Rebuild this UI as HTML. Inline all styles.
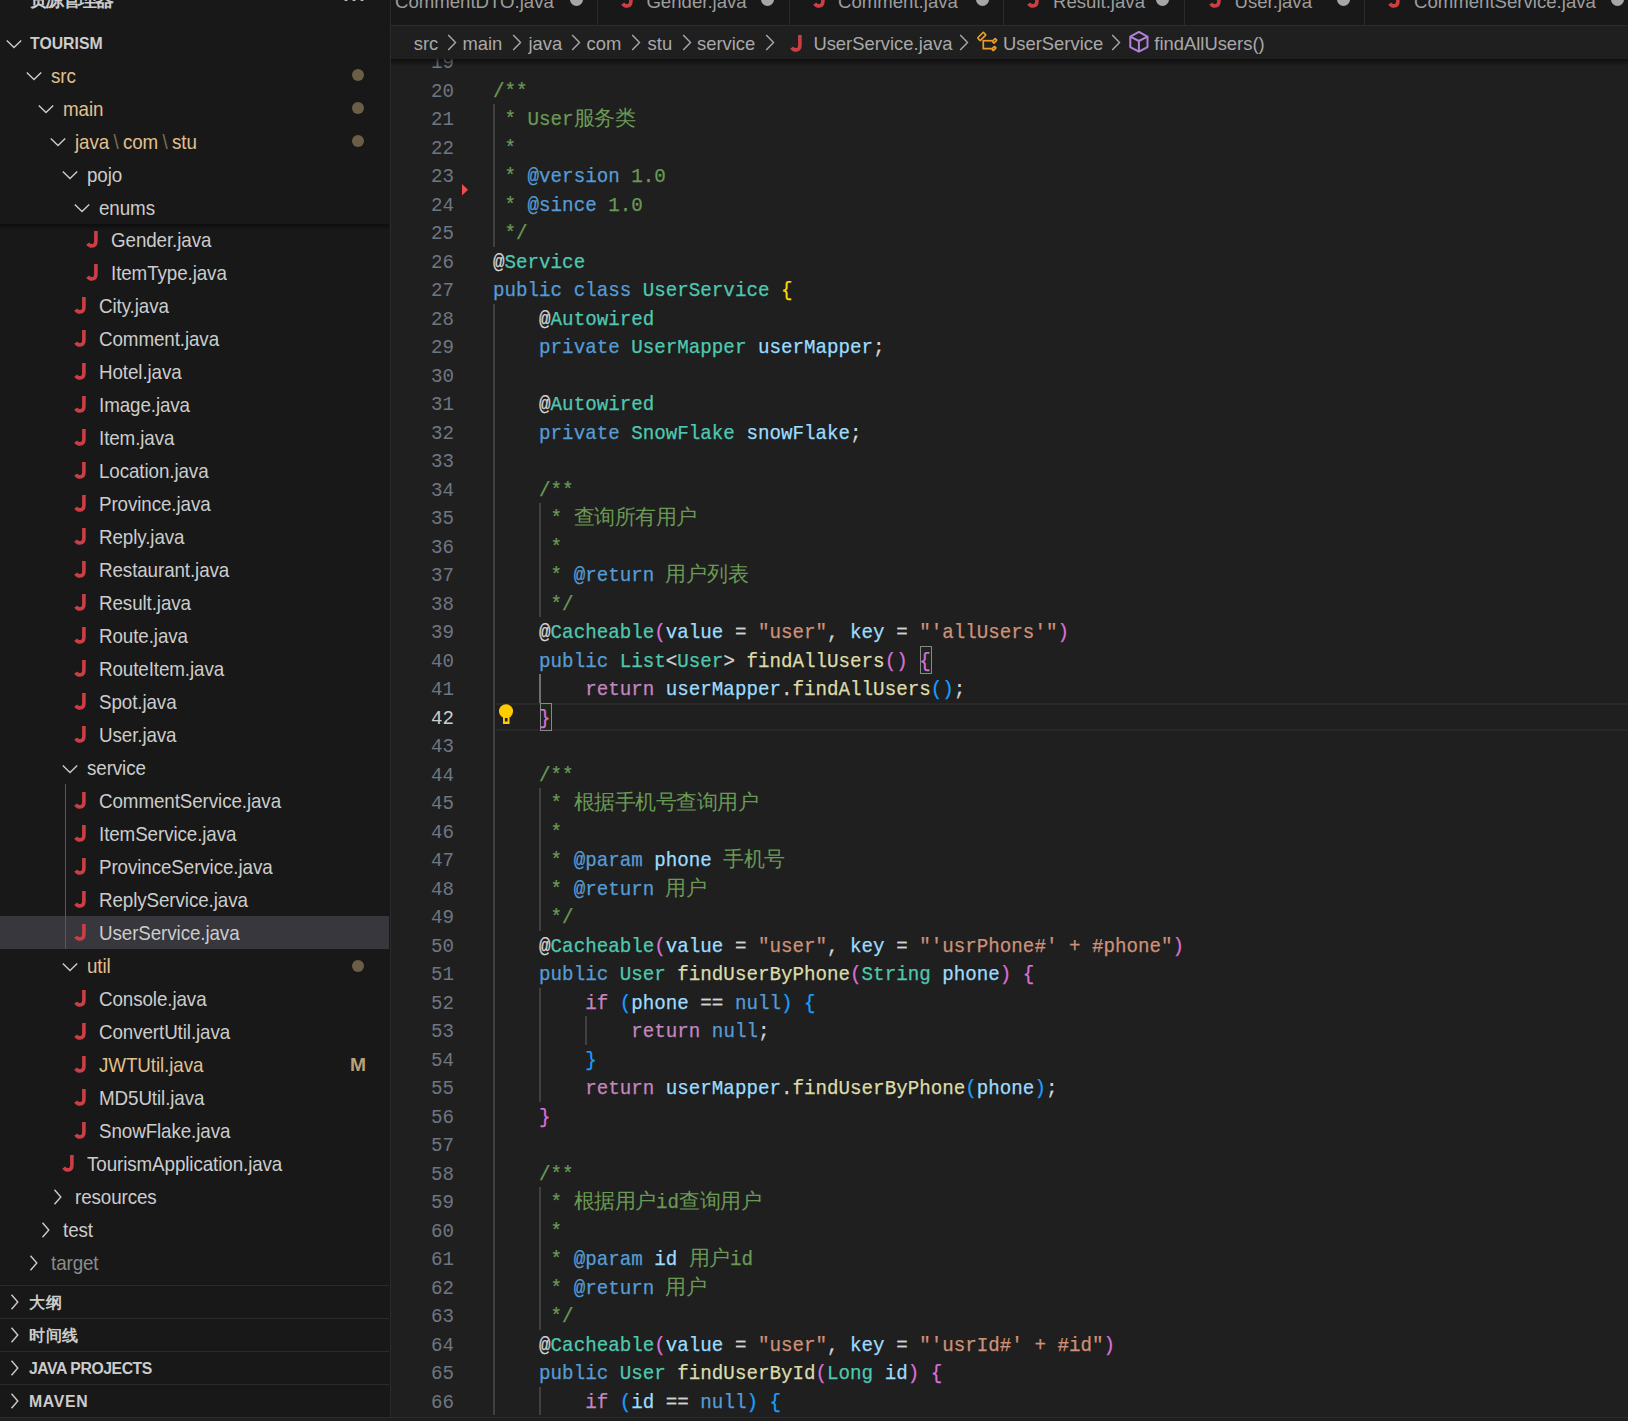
<!DOCTYPE html>
<html><head><meta charset="utf-8"><style>
*{margin:0;padding:0;box-sizing:border-box}
html,body{width:1628px;height:1421px;overflow:hidden;background:#1f1f1f}
body{position:relative;font-family:"Liberation Sans",sans-serif}
#sb{position:absolute;left:0;top:0;width:390px;height:1421px;background:#181818;overflow:hidden}
#vb{position:absolute;left:390px;top:0;width:1px;height:1421px;background:#2b2b2b}
.ch{position:absolute}
.ji{position:absolute}
.lb{position:absolute;height:33px;line-height:33px;font-size:19.8px;letter-spacing:-0.1px;white-space:nowrap;transform:scaleX(0.95);transform-origin:left;padding-top:2.3px}
.dot{position:absolute;left:351.5px;width:12px;height:12px;border-radius:50%;background:#6b5e47}
.badge{position:absolute;left:349.5px;height:33px;line-height:33px;font-size:17.5px;font-weight:bold;color:#b9a077;padding-top:1px;transform:scaleX(1.1);transform-origin:left}
.sel{position:absolute;left:0;width:389px;height:33px;background:#37373d}
.tg{position:absolute;width:1px;background:#585858}
.stsh{position:absolute;left:0;width:389px;height:6px;background:linear-gradient(#0d0d0d,rgba(13,13,13,0))}
.sep{position:absolute;left:0;width:389px;height:1px;background:#2b2b2b}
.sh{position:absolute;left:29px;height:33px;line-height:33px;font-size:15.8px;font-weight:bold;color:#cccccc;padding-top:1px;white-space:nowrap}
.cjh{display:inline-block;width:16.5px;text-align:center}
#tabs{position:absolute;left:391px;top:0;width:1237px;height:26px;background:#181818;border-bottom:1px solid #2b2b2b;overflow:hidden}
.tt{position:absolute;top:-13px;height:30px;line-height:30px;font-size:18.6px;color:#9d9d9d;white-space:nowrap}
.tdot{position:absolute;top:-7px;width:13px;height:13px;border-radius:50%;background:#a6a6a6}
.tsep{position:absolute;top:0;width:1px;height:25px;background:#2b2b2b}
#bc{position:absolute;left:391px;top:26px;width:1237px;height:33px;background:#1f1f1f}
.bt{position:absolute;top:27px;height:33px;line-height:33px;font-size:18.4px;color:#a9a9a9;white-space:nowrap;padding-top:0px}
.bch{position:absolute}
#bcsh{position:absolute;left:391px;top:59px;width:1237px;height:7px;background:linear-gradient(rgba(0,0,0,0.55),rgba(0,0,0,0))}
#ed{position:absolute;left:391px;top:0;width:1237px;height:1421px}
.ln{position:absolute;left:0;width:63px;text-align:right;height:28.5px;line-height:28.5px;font-family:"Liberation Mono",monospace;font-size:20.6px;color:#6e7681;padding-top:2.4px;transform:scaleX(0.9320);transform-origin:right}
.ln.act{color:#cccccc}
.cl{position:absolute;left:102px;height:28.5px;line-height:28.5px;font-family:"Liberation Mono",monospace;font-size:20.6px;white-space:pre;color:#d4d4d4;padding-top:2.4px;-webkit-text-stroke:0.25px currentColor;transform:scaleX(0.9320);transform-origin:left}
.cj{display:inline-block;width:22.102px;text-align:center;color:#6A9955;font-size:20.5px;font-weight:300;-webkit-text-stroke:0;transform:scaleX(1.0729)}
.ig{position:absolute;width:1.5px;background:#404040}
.iga{background:#707070}
.cm{color:#6A9955}.kw{color:#569CD6}.ctl{color:#C586C0}.ty{color:#4EC9B0}.var{color:#9CDCFE}.fn{color:#DCDCAA}.str{color:#CE9178}.p{color:#D4D4D4}.b1{color:#FFD700}.b2{color:#DA70D6}.b3{color:#179FFF}.tag{color:#569CD6}
.ln{position:absolute}
</style></head><body>
<div id="sb">
<div style="position:absolute;left:28.5px;top:-10.7px;font-size:18.5px;font-weight:bold;color:#cccccc;white-space:nowrap;line-height:22px"><span style="display:inline-block;width:16.6px">资</span><span style="display:inline-block;width:16.6px">源</span><span style="display:inline-block;width:16.6px">管</span><span style="display:inline-block;width:16.6px">理</span><span style="display:inline-block;width:16.6px">器</span></div>
<div style="position:absolute;left:344px;top:-3px;width:22px;height:6px">
<div style="position:absolute;left:0;top:0;width:4px;height:4px;border-radius:50%;background:#ccc"></div>
<div style="position:absolute;left:8px;top:0;width:4px;height:4px;border-radius:50%;background:#ccc"></div>
<div style="position:absolute;left:16px;top:0;width:4px;height:4px;border-radius:50%;background:#ccc"></div>
</div>
<svg class="ch" style="left:6px;top:35.8px" width="16" height="16" viewBox="0 0 16 16"><path d="M0.8 4.4 L8 11.6 L15.2 4.4" fill="none" stroke="#cccccc" stroke-width="1.4"/></svg>
<div class="sh" style="left:29.5px;top:25.8px;font-size:16.4px;transform:scaleX(0.965);transform-origin:left">TOURISM</div>
<div class="sel" style="top:916px"></div><div class="tg" style="left:65px;top:784px;height:165px"></div><svg class="ch" style="left:25.5px;top:68.0px" width="16" height="16" viewBox="0 0 16 16"><path d="M0.8 4.4 L8 11.6 L15.2 4.4" fill="none" stroke="#cccccc" stroke-width="1.4"/></svg><div class="lb" style="left:50.5px;top:58px;color:#E2C08D;padding-top:2.0px">src</div><div class="dot" style="top:68.5px"></div><svg class="ch" style="left:37.5px;top:101.0px" width="16" height="16" viewBox="0 0 16 16"><path d="M0.8 4.4 L8 11.6 L15.2 4.4" fill="none" stroke="#cccccc" stroke-width="1.4"/></svg><div class="lb" style="left:62.5px;top:91px;color:#E2C08D;padding-top:2.0px">main</div><div class="dot" style="top:101.5px"></div><svg class="ch" style="left:49.5px;top:134.0px" width="16" height="16" viewBox="0 0 16 16"><path d="M0.8 4.4 L8 11.6 L15.2 4.4" fill="none" stroke="#cccccc" stroke-width="1.4"/></svg><div class="lb" style="left:74.5px;top:124px;color:#E2C08D;padding-top:2.0px">java<span style="color:#7d6e55;padding:0 4.6px">\</span>com<span style="color:#7d6e55;padding:0 4.6px">\</span>stu</div><div class="dot" style="top:134.5px"></div><svg class="ch" style="left:61.5px;top:167.0px" width="16" height="16" viewBox="0 0 16 16"><path d="M0.8 4.4 L8 11.6 L15.2 4.4" fill="none" stroke="#cccccc" stroke-width="1.4"/></svg><div class="lb" style="left:86.5px;top:157px;color:#cccccc;padding-top:2.0px">pojo</div><svg class="ch" style="left:73.5px;top:200.0px" width="16" height="16" viewBox="0 0 16 16"><path d="M0.8 4.4 L8 11.6 L15.2 4.4" fill="none" stroke="#cccccc" stroke-width="1.4"/></svg><div class="lb" style="left:98.5px;top:190px;color:#cccccc;padding-top:2.0px">enums</div><svg class="ji" style="left:86px;top:231px" width="14" height="17" viewBox="0 0 14 17"><path d="M9.9 0 V10.3 Q9.9 14.9 5.9 14.9 Q3.3 14.9 1.7 12.6" fill="none" stroke="#cc3e44" stroke-width="3.6" stroke-linecap="butt"/></svg><div class="lb" style="left:110.5px;top:223px;color:#cccccc;padding-top:1.0px">Gender.java</div><svg class="ji" style="left:86px;top:264px" width="14" height="17" viewBox="0 0 14 17"><path d="M9.9 0 V10.3 Q9.9 14.9 5.9 14.9 Q3.3 14.9 1.7 12.6" fill="none" stroke="#cc3e44" stroke-width="3.6" stroke-linecap="butt"/></svg><div class="lb" style="left:110.5px;top:256px;color:#cccccc;padding-top:1.0px">ItemType.java</div><svg class="ji" style="left:74px;top:297px" width="14" height="17" viewBox="0 0 14 17"><path d="M9.9 0 V10.3 Q9.9 14.9 5.9 14.9 Q3.3 14.9 1.7 12.6" fill="none" stroke="#cc3e44" stroke-width="3.6" stroke-linecap="butt"/></svg><div class="lb" style="left:98.5px;top:289px;color:#cccccc;padding-top:1.0px">City.java</div><svg class="ji" style="left:74px;top:330px" width="14" height="17" viewBox="0 0 14 17"><path d="M9.9 0 V10.3 Q9.9 14.9 5.9 14.9 Q3.3 14.9 1.7 12.6" fill="none" stroke="#cc3e44" stroke-width="3.6" stroke-linecap="butt"/></svg><div class="lb" style="left:98.5px;top:322px;color:#cccccc;padding-top:1.0px">Comment.java</div><svg class="ji" style="left:74px;top:363px" width="14" height="17" viewBox="0 0 14 17"><path d="M9.9 0 V10.3 Q9.9 14.9 5.9 14.9 Q3.3 14.9 1.7 12.6" fill="none" stroke="#cc3e44" stroke-width="3.6" stroke-linecap="butt"/></svg><div class="lb" style="left:98.5px;top:355px;color:#cccccc;padding-top:1.0px">Hotel.java</div><svg class="ji" style="left:74px;top:396px" width="14" height="17" viewBox="0 0 14 17"><path d="M9.9 0 V10.3 Q9.9 14.9 5.9 14.9 Q3.3 14.9 1.7 12.6" fill="none" stroke="#cc3e44" stroke-width="3.6" stroke-linecap="butt"/></svg><div class="lb" style="left:98.5px;top:388px;color:#cccccc;padding-top:1.0px">Image.java</div><svg class="ji" style="left:74px;top:429px" width="14" height="17" viewBox="0 0 14 17"><path d="M9.9 0 V10.3 Q9.9 14.9 5.9 14.9 Q3.3 14.9 1.7 12.6" fill="none" stroke="#cc3e44" stroke-width="3.6" stroke-linecap="butt"/></svg><div class="lb" style="left:98.5px;top:421px;color:#cccccc;padding-top:1.0px">Item.java</div><svg class="ji" style="left:74px;top:462px" width="14" height="17" viewBox="0 0 14 17"><path d="M9.9 0 V10.3 Q9.9 14.9 5.9 14.9 Q3.3 14.9 1.7 12.6" fill="none" stroke="#cc3e44" stroke-width="3.6" stroke-linecap="butt"/></svg><div class="lb" style="left:98.5px;top:454px;color:#cccccc;padding-top:1.0px">Location.java</div><svg class="ji" style="left:74px;top:495px" width="14" height="17" viewBox="0 0 14 17"><path d="M9.9 0 V10.3 Q9.9 14.9 5.9 14.9 Q3.3 14.9 1.7 12.6" fill="none" stroke="#cc3e44" stroke-width="3.6" stroke-linecap="butt"/></svg><div class="lb" style="left:98.5px;top:487px;color:#cccccc;padding-top:1.0px">Province.java</div><svg class="ji" style="left:74px;top:528px" width="14" height="17" viewBox="0 0 14 17"><path d="M9.9 0 V10.3 Q9.9 14.9 5.9 14.9 Q3.3 14.9 1.7 12.6" fill="none" stroke="#cc3e44" stroke-width="3.6" stroke-linecap="butt"/></svg><div class="lb" style="left:98.5px;top:520px;color:#cccccc;padding-top:1.0px">Reply.java</div><svg class="ji" style="left:74px;top:561px" width="14" height="17" viewBox="0 0 14 17"><path d="M9.9 0 V10.3 Q9.9 14.9 5.9 14.9 Q3.3 14.9 1.7 12.6" fill="none" stroke="#cc3e44" stroke-width="3.6" stroke-linecap="butt"/></svg><div class="lb" style="left:98.5px;top:553px;color:#cccccc;padding-top:1.0px">Restaurant.java</div><svg class="ji" style="left:74px;top:594px" width="14" height="17" viewBox="0 0 14 17"><path d="M9.9 0 V10.3 Q9.9 14.9 5.9 14.9 Q3.3 14.9 1.7 12.6" fill="none" stroke="#cc3e44" stroke-width="3.6" stroke-linecap="butt"/></svg><div class="lb" style="left:98.5px;top:586px;color:#cccccc;padding-top:1.0px">Result.java</div><svg class="ji" style="left:74px;top:627px" width="14" height="17" viewBox="0 0 14 17"><path d="M9.9 0 V10.3 Q9.9 14.9 5.9 14.9 Q3.3 14.9 1.7 12.6" fill="none" stroke="#cc3e44" stroke-width="3.6" stroke-linecap="butt"/></svg><div class="lb" style="left:98.5px;top:619px;color:#cccccc;padding-top:1.0px">Route.java</div><svg class="ji" style="left:74px;top:660px" width="14" height="17" viewBox="0 0 14 17"><path d="M9.9 0 V10.3 Q9.9 14.9 5.9 14.9 Q3.3 14.9 1.7 12.6" fill="none" stroke="#cc3e44" stroke-width="3.6" stroke-linecap="butt"/></svg><div class="lb" style="left:98.5px;top:652px;color:#cccccc;padding-top:1.0px">RouteItem.java</div><svg class="ji" style="left:74px;top:693px" width="14" height="17" viewBox="0 0 14 17"><path d="M9.9 0 V10.3 Q9.9 14.9 5.9 14.9 Q3.3 14.9 1.7 12.6" fill="none" stroke="#cc3e44" stroke-width="3.6" stroke-linecap="butt"/></svg><div class="lb" style="left:98.5px;top:685px;color:#cccccc;padding-top:1.0px">Spot.java</div><svg class="ji" style="left:74px;top:726px" width="14" height="17" viewBox="0 0 14 17"><path d="M9.9 0 V10.3 Q9.9 14.9 5.9 14.9 Q3.3 14.9 1.7 12.6" fill="none" stroke="#cc3e44" stroke-width="3.6" stroke-linecap="butt"/></svg><div class="lb" style="left:98.5px;top:718px;color:#cccccc;padding-top:1.0px">User.java</div><svg class="ch" style="left:61.5px;top:761.0px" width="16" height="16" viewBox="0 0 16 16"><path d="M0.8 4.4 L8 11.6 L15.2 4.4" fill="none" stroke="#cccccc" stroke-width="1.4"/></svg><div class="lb" style="left:86.5px;top:751px;color:#cccccc;padding-top:1.0px">service</div><svg class="ji" style="left:74px;top:792px" width="14" height="17" viewBox="0 0 14 17"><path d="M9.9 0 V10.3 Q9.9 14.9 5.9 14.9 Q3.3 14.9 1.7 12.6" fill="none" stroke="#cc3e44" stroke-width="3.6" stroke-linecap="butt"/></svg><div class="lb" style="left:98.5px;top:784px;color:#cccccc;padding-top:1.0px">CommentService.java</div><svg class="ji" style="left:74px;top:825px" width="14" height="17" viewBox="0 0 14 17"><path d="M9.9 0 V10.3 Q9.9 14.9 5.9 14.9 Q3.3 14.9 1.7 12.6" fill="none" stroke="#cc3e44" stroke-width="3.6" stroke-linecap="butt"/></svg><div class="lb" style="left:98.5px;top:817px;color:#cccccc;padding-top:1.0px">ItemService.java</div><svg class="ji" style="left:74px;top:858px" width="14" height="17" viewBox="0 0 14 17"><path d="M9.9 0 V10.3 Q9.9 14.9 5.9 14.9 Q3.3 14.9 1.7 12.6" fill="none" stroke="#cc3e44" stroke-width="3.6" stroke-linecap="butt"/></svg><div class="lb" style="left:98.5px;top:850px;color:#cccccc;padding-top:1.0px">ProvinceService.java</div><svg class="ji" style="left:74px;top:891px" width="14" height="17" viewBox="0 0 14 17"><path d="M9.9 0 V10.3 Q9.9 14.9 5.9 14.9 Q3.3 14.9 1.7 12.6" fill="none" stroke="#cc3e44" stroke-width="3.6" stroke-linecap="butt"/></svg><div class="lb" style="left:98.5px;top:883px;color:#cccccc;padding-top:1.0px">ReplyService.java</div><svg class="ji" style="left:74px;top:924px" width="14" height="17" viewBox="0 0 14 17"><path d="M9.9 0 V10.3 Q9.9 14.9 5.9 14.9 Q3.3 14.9 1.7 12.6" fill="none" stroke="#cc3e44" stroke-width="3.6" stroke-linecap="butt"/></svg><div class="lb" style="left:98.5px;top:916px;color:#cccccc;padding-top:1.0px">UserService.java</div><svg class="ch" style="left:61.5px;top:959.0px" width="16" height="16" viewBox="0 0 16 16"><path d="M0.8 4.4 L8 11.6 L15.2 4.4" fill="none" stroke="#cccccc" stroke-width="1.4"/></svg><div class="lb" style="left:86.5px;top:949px;color:#E2C08D;padding-top:1.0px">util</div><div class="dot" style="top:959.5px"></div><svg class="ji" style="left:74px;top:990px" width="14" height="17" viewBox="0 0 14 17"><path d="M9.9 0 V10.3 Q9.9 14.9 5.9 14.9 Q3.3 14.9 1.7 12.6" fill="none" stroke="#cc3e44" stroke-width="3.6" stroke-linecap="butt"/></svg><div class="lb" style="left:98.5px;top:982px;color:#cccccc;padding-top:1.0px">Console.java</div><svg class="ji" style="left:74px;top:1023px" width="14" height="17" viewBox="0 0 14 17"><path d="M9.9 0 V10.3 Q9.9 14.9 5.9 14.9 Q3.3 14.9 1.7 12.6" fill="none" stroke="#cc3e44" stroke-width="3.6" stroke-linecap="butt"/></svg><div class="lb" style="left:98.5px;top:1015px;color:#cccccc;padding-top:1.0px">ConvertUtil.java</div><svg class="ji" style="left:74px;top:1056px" width="14" height="17" viewBox="0 0 14 17"><path d="M9.9 0 V10.3 Q9.9 14.9 5.9 14.9 Q3.3 14.9 1.7 12.6" fill="none" stroke="#cc3e44" stroke-width="3.6" stroke-linecap="butt"/></svg><div class="lb" style="left:98.5px;top:1048px;color:#E2C08D;padding-top:1.0px">JWTUtil.java</div><div class="badge" style="top:1048px">M</div><svg class="ji" style="left:74px;top:1089px" width="14" height="17" viewBox="0 0 14 17"><path d="M9.9 0 V10.3 Q9.9 14.9 5.9 14.9 Q3.3 14.9 1.7 12.6" fill="none" stroke="#cc3e44" stroke-width="3.6" stroke-linecap="butt"/></svg><div class="lb" style="left:98.5px;top:1081px;color:#cccccc;padding-top:1.0px">MD5Util.java</div><svg class="ji" style="left:74px;top:1122px" width="14" height="17" viewBox="0 0 14 17"><path d="M9.9 0 V10.3 Q9.9 14.9 5.9 14.9 Q3.3 14.9 1.7 12.6" fill="none" stroke="#cc3e44" stroke-width="3.6" stroke-linecap="butt"/></svg><div class="lb" style="left:98.5px;top:1114px;color:#cccccc;padding-top:1.0px">SnowFlake.java</div><svg class="ji" style="left:62px;top:1155px" width="14" height="17" viewBox="0 0 14 17"><path d="M9.9 0 V10.3 Q9.9 14.9 5.9 14.9 Q3.3 14.9 1.7 12.6" fill="none" stroke="#cc3e44" stroke-width="3.6" stroke-linecap="butt"/></svg><div class="lb" style="left:86.5px;top:1147px;color:#cccccc;padding-top:1.0px">TourismApplication.java</div><svg class="ch" style="left:49.5px;top:1189.0px" width="16" height="16" viewBox="0 0 16 16"><path d="M4.5 0.8 L10.8 8 L4.5 15.2" fill="none" stroke="#cccccc" stroke-width="1.4"/></svg><div class="lb" style="left:74.5px;top:1180px;color:#cccccc;padding-top:1.0px">resources</div><svg class="ch" style="left:37.5px;top:1222.0px" width="16" height="16" viewBox="0 0 16 16"><path d="M4.5 0.8 L10.8 8 L4.5 15.2" fill="none" stroke="#cccccc" stroke-width="1.4"/></svg><div class="lb" style="left:62.5px;top:1213px;color:#cccccc;padding-top:1.0px">test</div><svg class="ch" style="left:25.5px;top:1255.0px" width="16" height="16" viewBox="0 0 16 16"><path d="M4.5 0.8 L10.8 8 L4.5 15.2" fill="none" stroke="#cccccc" stroke-width="1.4"/></svg><div class="lb" style="left:50.5px;top:1246px;color:#8c8c8c;padding-top:1.0px">target</div>
<div class="stsh" style="top:224px"></div>
<div class="sep" style="top:1285px"></div><svg class="ch" style="left:6.5px;top:1294px" width="16" height="16" viewBox="0 0 16 16"><path d="M4.5 0.8 L10.8 8 L4.5 15.2" fill="none" stroke="#cccccc" stroke-width="1.4"/></svg><div class="sh" style="top:1285px"><span class="cjh">大</span><span class="cjh">纲</span></div><div class="sep" style="top:1318px"></div><svg class="ch" style="left:6.5px;top:1327px" width="16" height="16" viewBox="0 0 16 16"><path d="M4.5 0.8 L10.8 8 L4.5 15.2" fill="none" stroke="#cccccc" stroke-width="1.4"/></svg><div class="sh" style="top:1318px"><span class="cjh">时</span><span class="cjh">间</span><span class="cjh">线</span></div><div class="sep" style="top:1351px"></div><svg class="ch" style="left:6.5px;top:1360px" width="16" height="16" viewBox="0 0 16 16"><path d="M4.5 0.8 L10.8 8 L4.5 15.2" fill="none" stroke="#cccccc" stroke-width="1.4"/></svg><div class="sh" style="top:1351px;letter-spacing:-0.45px">JAVA PROJECTS</div><div class="sep" style="top:1384px"></div><svg class="ch" style="left:6.5px;top:1393px" width="16" height="16" viewBox="0 0 16 16"><path d="M4.5 0.8 L10.8 8 L4.5 15.2" fill="none" stroke="#cccccc" stroke-width="1.4"/></svg><div class="sh" style="top:1384px;letter-spacing:0.7px">MAVEN</div><div class="sep" style="top:1417px"></div>
</div>
<div id="vb"></div>
<div style="position:absolute;left:496px;top:702.5px;width:1132px;height:28.5px;border-top:2px solid #282828;border-bottom:2px solid #282828"></div><div class="ig" style="left:493.0px;top:104.0px;height:142.5px"></div><div class="ig" style="left:493.0px;top:303.5px;height:1111.5px"></div><div class="ig" style="left:539.1px;top:503.0px;height:114.0px"></div><div class="ig iga" style="left:539.1px;top:674.0px;height:28.5px"></div><div class="ig" style="left:539.1px;top:788.0px;height:142.5px"></div><div class="ig" style="left:539.1px;top:987.5px;height:114.0px"></div><div class="ig" style="left:585.2px;top:1016.0px;height:28.5px"></div><div class="ig" style="left:539.1px;top:1187.0px;height:142.5px"></div><div class="ig" style="left:539.1px;top:1386.5px;height:28.5px"></div><div style="position:absolute;left:919.7px;top:645.5px;width:12.1px;height:28.5px;border:1px solid #888888;background:rgba(0,100,0,0.1)"></div><div style="position:absolute;left:539.6px;top:702.5px;width:12.1px;height:28.5px;border:1px solid #888888;background:rgba(0,100,0,0.1)"></div><div class="ln" style="left:391px;top:47.0px">19</div><div class="cl" style="left:493px;top:47.0px"></div><div class="ln" style="left:391px;top:75.5px">20</div><div class="cl" style="left:493px;top:75.5px"><span class="cm">/**</span></div><div class="ln" style="left:391px;top:104.0px">21</div><div class="cl" style="left:493px;top:104.0px"><span class="cm"> * User</span><span class="cj">服</span><span class="cj">务</span><span class="cj">类</span></div><div class="ln" style="left:391px;top:132.5px">22</div><div class="cl" style="left:493px;top:132.5px"><span class="cm"> *</span></div><div class="ln" style="left:391px;top:161.0px">23</div><div class="cl" style="left:493px;top:161.0px"><span class="cm"> * </span><span class="tag">@version</span><span class="cm"> 1.0</span></div><div class="ln" style="left:391px;top:189.5px">24</div><div class="cl" style="left:493px;top:189.5px"><span class="cm"> * </span><span class="tag">@since</span><span class="cm"> 1.0</span></div><div class="ln" style="left:391px;top:218.0px">25</div><div class="cl" style="left:493px;top:218.0px"><span class="cm"> */</span></div><div class="ln" style="left:391px;top:246.5px">26</div><div class="cl" style="left:493px;top:246.5px"><span class="p">@</span><span class="ty">Service</span></div><div class="ln" style="left:391px;top:275.0px">27</div><div class="cl" style="left:493px;top:275.0px"><span class="kw">public</span><span class="p"> </span><span class="kw">class</span><span class="p"> </span><span class="ty">UserService</span><span class="p"> </span><span class="b1">{</span></div><div class="ln" style="left:391px;top:303.5px">28</div><div class="cl" style="left:493px;top:303.5px"><span class="p">    @</span><span class="ty">Autowired</span></div><div class="ln" style="left:391px;top:332.0px">29</div><div class="cl" style="left:493px;top:332.0px"><span class="p">    </span><span class="kw">private</span><span class="p"> </span><span class="ty">UserMapper</span><span class="p"> </span><span class="var">userMapper</span><span class="p">;</span></div><div class="ln" style="left:391px;top:360.5px">30</div><div class="cl" style="left:493px;top:360.5px"></div><div class="ln" style="left:391px;top:389.0px">31</div><div class="cl" style="left:493px;top:389.0px"><span class="p">    @</span><span class="ty">Autowired</span></div><div class="ln" style="left:391px;top:417.5px">32</div><div class="cl" style="left:493px;top:417.5px"><span class="p">    </span><span class="kw">private</span><span class="p"> </span><span class="ty">SnowFlake</span><span class="p"> </span><span class="var">snowFlake</span><span class="p">;</span></div><div class="ln" style="left:391px;top:446.0px">33</div><div class="cl" style="left:493px;top:446.0px"></div><div class="ln" style="left:391px;top:474.5px">34</div><div class="cl" style="left:493px;top:474.5px"><span class="cm">    /**</span></div><div class="ln" style="left:391px;top:503.0px">35</div><div class="cl" style="left:493px;top:503.0px"><span class="cm">     * </span><span class="cj">查</span><span class="cj">询</span><span class="cj">所</span><span class="cj">有</span><span class="cj">用</span><span class="cj">户</span></div><div class="ln" style="left:391px;top:531.5px">36</div><div class="cl" style="left:493px;top:531.5px"><span class="cm">     *</span></div><div class="ln" style="left:391px;top:560.0px">37</div><div class="cl" style="left:493px;top:560.0px"><span class="cm">     * </span><span class="tag">@return</span><span class="cm"> </span><span class="cj">用</span><span class="cj">户</span><span class="cj">列</span><span class="cj">表</span></div><div class="ln" style="left:391px;top:588.5px">38</div><div class="cl" style="left:493px;top:588.5px"><span class="cm">     */</span></div><div class="ln" style="left:391px;top:617.0px">39</div><div class="cl" style="left:493px;top:617.0px"><span class="p">    @</span><span class="ty">Cacheable</span><span class="b2">(</span><span class="var">value</span><span class="p"> = </span><span class="str">"user"</span><span class="p">, </span><span class="var">key</span><span class="p"> = </span><span class="str">"'allUsers'"</span><span class="b2">)</span></div><div class="ln" style="left:391px;top:645.5px">40</div><div class="cl" style="left:493px;top:645.5px"><span class="p">    </span><span class="kw">public</span><span class="p"> </span><span class="ty">List</span><span class="p">&lt;</span><span class="ty">User</span><span class="p">&gt; </span><span class="fn">findAllUsers</span><span class="b2">()</span><span class="p"> </span><span class="b2">{</span></div><div class="ln" style="left:391px;top:674.0px">41</div><div class="cl" style="left:493px;top:674.0px"><span class="p">        </span><span class="ctl">return</span><span class="p"> </span><span class="var">userMapper</span><span class="p">.</span><span class="fn">findAllUsers</span><span class="b3">()</span><span class="p">;</span></div><div class="ln act" style="left:391px;top:702.5px">42</div><div class="cl" style="left:493px;top:702.5px"><span class="p">    </span><span class="b2">}</span></div><div class="ln" style="left:391px;top:731.0px">43</div><div class="cl" style="left:493px;top:731.0px"></div><div class="ln" style="left:391px;top:759.5px">44</div><div class="cl" style="left:493px;top:759.5px"><span class="cm">    /**</span></div><div class="ln" style="left:391px;top:788.0px">45</div><div class="cl" style="left:493px;top:788.0px"><span class="cm">     * </span><span class="cj">根</span><span class="cj">据</span><span class="cj">手</span><span class="cj">机</span><span class="cj">号</span><span class="cj">查</span><span class="cj">询</span><span class="cj">用</span><span class="cj">户</span></div><div class="ln" style="left:391px;top:816.5px">46</div><div class="cl" style="left:493px;top:816.5px"><span class="cm">     *</span></div><div class="ln" style="left:391px;top:845.0px">47</div><div class="cl" style="left:493px;top:845.0px"><span class="cm">     * </span><span class="tag">@param</span><span class="cm"> </span><span class="var">phone</span><span class="cm"> </span><span class="cj">手</span><span class="cj">机</span><span class="cj">号</span></div><div class="ln" style="left:391px;top:873.5px">48</div><div class="cl" style="left:493px;top:873.5px"><span class="cm">     * </span><span class="tag">@return</span><span class="cm"> </span><span class="cj">用</span><span class="cj">户</span></div><div class="ln" style="left:391px;top:902.0px">49</div><div class="cl" style="left:493px;top:902.0px"><span class="cm">     */</span></div><div class="ln" style="left:391px;top:930.5px">50</div><div class="cl" style="left:493px;top:930.5px"><span class="p">    @</span><span class="ty">Cacheable</span><span class="b2">(</span><span class="var">value</span><span class="p"> = </span><span class="str">"user"</span><span class="p">, </span><span class="var">key</span><span class="p"> = </span><span class="str">"'usrPhone#' + #phone"</span><span class="b2">)</span></div><div class="ln" style="left:391px;top:959.0px">51</div><div class="cl" style="left:493px;top:959.0px"><span class="p">    </span><span class="kw">public</span><span class="p"> </span><span class="ty">User</span><span class="p"> </span><span class="fn">findUserByPhone</span><span class="b2">(</span><span class="ty">String</span><span class="p"> </span><span class="var">phone</span><span class="b2">)</span><span class="p"> </span><span class="b2">{</span></div><div class="ln" style="left:391px;top:987.5px">52</div><div class="cl" style="left:493px;top:987.5px"><span class="p">        </span><span class="ctl">if</span><span class="p"> </span><span class="b3">(</span><span class="var">phone</span><span class="p"> == </span><span class="kw">null</span><span class="b3">)</span><span class="p"> </span><span class="b3">{</span></div><div class="ln" style="left:391px;top:1016.0px">53</div><div class="cl" style="left:493px;top:1016.0px"><span class="p">            </span><span class="ctl">return</span><span class="p"> </span><span class="kw">null</span><span class="p">;</span></div><div class="ln" style="left:391px;top:1044.5px">54</div><div class="cl" style="left:493px;top:1044.5px"><span class="p">        </span><span class="b3">}</span></div><div class="ln" style="left:391px;top:1073.0px">55</div><div class="cl" style="left:493px;top:1073.0px"><span class="p">        </span><span class="ctl">return</span><span class="p"> </span><span class="var">userMapper</span><span class="p">.</span><span class="fn">findUserByPhone</span><span class="b3">(</span><span class="var">phone</span><span class="b3">)</span><span class="p">;</span></div><div class="ln" style="left:391px;top:1101.5px">56</div><div class="cl" style="left:493px;top:1101.5px"><span class="p">    </span><span class="b2">}</span></div><div class="ln" style="left:391px;top:1130.0px">57</div><div class="cl" style="left:493px;top:1130.0px"></div><div class="ln" style="left:391px;top:1158.5px">58</div><div class="cl" style="left:493px;top:1158.5px"><span class="cm">    /**</span></div><div class="ln" style="left:391px;top:1187.0px">59</div><div class="cl" style="left:493px;top:1187.0px"><span class="cm">     * </span><span class="cj">根</span><span class="cj">据</span><span class="cj">用</span><span class="cj">户</span><span class="cm">id</span><span class="cj">查</span><span class="cj">询</span><span class="cj">用</span><span class="cj">户</span></div><div class="ln" style="left:391px;top:1215.5px">60</div><div class="cl" style="left:493px;top:1215.5px"><span class="cm">     *</span></div><div class="ln" style="left:391px;top:1244.0px">61</div><div class="cl" style="left:493px;top:1244.0px"><span class="cm">     * </span><span class="tag">@param</span><span class="cm"> </span><span class="var">id</span><span class="cm"> </span><span class="cj">用</span><span class="cj">户</span><span class="cm">id</span></div><div class="ln" style="left:391px;top:1272.5px">62</div><div class="cl" style="left:493px;top:1272.5px"><span class="cm">     * </span><span class="tag">@return</span><span class="cm"> </span><span class="cj">用</span><span class="cj">户</span></div><div class="ln" style="left:391px;top:1301.0px">63</div><div class="cl" style="left:493px;top:1301.0px"><span class="cm">     */</span></div><div class="ln" style="left:391px;top:1329.5px">64</div><div class="cl" style="left:493px;top:1329.5px"><span class="p">    @</span><span class="ty">Cacheable</span><span class="b2">(</span><span class="var">value</span><span class="p"> = </span><span class="str">"user"</span><span class="p">, </span><span class="var">key</span><span class="p"> = </span><span class="str">"'usrId#' + #id"</span><span class="b2">)</span></div><div class="ln" style="left:391px;top:1358.0px">65</div><div class="cl" style="left:493px;top:1358.0px"><span class="p">    </span><span class="kw">public</span><span class="p"> </span><span class="ty">User</span><span class="p"> </span><span class="fn">findUserById</span><span class="b2">(</span><span class="ty">Long</span><span class="p"> </span><span class="var">id</span><span class="b2">)</span><span class="p"> </span><span class="b2">{</span></div><div class="ln" style="left:391px;top:1386.5px">66</div><div class="cl" style="left:493px;top:1386.5px"><span class="p">        </span><span class="ctl">if</span><span class="p"> </span><span class="b3">(</span><span class="var">id</span><span class="p"> == </span><span class="kw">null</span><span class="b3">)</span><span class="p"> </span><span class="b3">{</span></div><svg style="position:absolute;left:497px;top:704px" width="17" height="21" viewBox="0 0 17 21"><circle cx="9" cy="7.3" r="7" fill="#FFCC00"/><rect x="6" y="11" width="6.5" height="9" fill="#FFCC00"/><rect x="7.9" y="14" width="2.6" height="3.5" fill="#1f1f1f"/></svg><svg style="position:absolute;left:460px;top:182px" width="10" height="15" viewBox="0 0 10 15"><path d="M2 2 L8 7.8 L2 13.6 Z" fill="#F14C4C"/></svg>
<div id="tabs"></div>
<div class="tt" style="left:395px">CommentDTO.java</div><div class="tdot" style="left:569.5px"></div><div class="tsep" style="left:597px"></div><svg class="ji" style="left:621.3px;top:-9px" width="14" height="17" viewBox="0 0 14 17"><path d="M9.9 0 V10.3 Q9.9 14.9 5.9 14.9 Q3.3 14.9 1.7 12.6" fill="none" stroke="#cc3e44" stroke-width="3.6" stroke-linecap="butt"/></svg><div class="tt" style="left:646.4px">Gender.java</div><div class="tdot" style="left:761.3px"></div><div class="tsep" style="left:789px"></div><svg class="ji" style="left:813.3px;top:-9px" width="14" height="17" viewBox="0 0 14 17"><path d="M9.9 0 V10.3 Q9.9 14.9 5.9 14.9 Q3.3 14.9 1.7 12.6" fill="none" stroke="#cc3e44" stroke-width="3.6" stroke-linecap="butt"/></svg><div class="tt" style="left:838px">Comment.java</div><div class="tdot" style="left:976.2px"></div><div class="tsep" style="left:1003px"></div><svg class="ji" style="left:1027.3px;top:-9px" width="14" height="17" viewBox="0 0 14 17"><path d="M9.9 0 V10.3 Q9.9 14.9 5.9 14.9 Q3.3 14.9 1.7 12.6" fill="none" stroke="#cc3e44" stroke-width="3.6" stroke-linecap="butt"/></svg><div class="tt" style="left:1053px">Result.java</div><div class="tdot" style="left:1156.3px"></div><div class="tsep" style="left:1184px"></div><svg class="ji" style="left:1209.0px;top:-9px" width="14" height="17" viewBox="0 0 14 17"><path d="M9.9 0 V10.3 Q9.9 14.9 5.9 14.9 Q3.3 14.9 1.7 12.6" fill="none" stroke="#cc3e44" stroke-width="3.6" stroke-linecap="butt"/></svg><div class="tt" style="left:1234.5px">User.java</div><div class="tdot" style="left:1337.2px"></div><div class="tsep" style="left:1364px"></div><svg class="ji" style="left:1388.3px;top:-9px" width="14" height="17" viewBox="0 0 14 17"><path d="M9.9 0 V10.3 Q9.9 14.9 5.9 14.9 Q3.3 14.9 1.7 12.6" fill="none" stroke="#cc3e44" stroke-width="3.6" stroke-linecap="butt"/></svg><div class="tt" style="left:1414px">CommentService.java</div><div class="tdot" style="left:1611.0px"></div>
<div id="bc"></div>
<div class="bt" style="left:413.7px">src</div><div class="bt" style="left:462.4px">main</div><div class="bt" style="left:528.5px">java</div><div class="bt" style="left:586.5px">com</div><div class="bt" style="left:647.6px">stu</div><div class="bt" style="left:697px">service</div><svg class="bch" style="left:446.5px;top:34px" width="10" height="17" viewBox="0 0 10 17"><path d="M1.2 1 L8.5 8.5 L1.2 16" fill="none" stroke="#a9a9a9" stroke-width="1.4"/></svg><svg class="bch" style="left:512px;top:34px" width="10" height="17" viewBox="0 0 10 17"><path d="M1.2 1 L8.5 8.5 L1.2 16" fill="none" stroke="#a9a9a9" stroke-width="1.4"/></svg><svg class="bch" style="left:570.5px;top:34px" width="10" height="17" viewBox="0 0 10 17"><path d="M1.2 1 L8.5 8.5 L1.2 16" fill="none" stroke="#a9a9a9" stroke-width="1.4"/></svg><svg class="bch" style="left:631px;top:34px" width="10" height="17" viewBox="0 0 10 17"><path d="M1.2 1 L8.5 8.5 L1.2 16" fill="none" stroke="#a9a9a9" stroke-width="1.4"/></svg><svg class="bch" style="left:682px;top:34px" width="10" height="17" viewBox="0 0 10 17"><path d="M1.2 1 L8.5 8.5 L1.2 16" fill="none" stroke="#a9a9a9" stroke-width="1.4"/></svg><svg class="bch" style="left:765px;top:34px" width="10" height="17" viewBox="0 0 10 17"><path d="M1.2 1 L8.5 8.5 L1.2 16" fill="none" stroke="#a9a9a9" stroke-width="1.4"/></svg><svg class="bch" style="left:958.5px;top:34px" width="10" height="17" viewBox="0 0 10 17"><path d="M1.2 1 L8.5 8.5 L1.2 16" fill="none" stroke="#a9a9a9" stroke-width="1.4"/></svg><svg class="bch" style="left:1110.5px;top:34px" width="10" height="17" viewBox="0 0 10 17"><path d="M1.2 1 L8.5 8.5 L1.2 16" fill="none" stroke="#a9a9a9" stroke-width="1.4"/></svg><svg class="ji" style="left:789.7px;top:34.5px" width="14" height="17" viewBox="0 0 14 17"><path d="M9.9 0 V10.3 Q9.9 14.9 5.9 14.9 Q3.3 14.9 1.7 12.6" fill="none" stroke="#cc3e44" stroke-width="3.6" stroke-linecap="butt"/></svg><div class="bt" style="left:813.4px">UserService.java</div><div class="bt" style="left:1003px">UserService</div><div class="bt" style="left:1154.3px">findAllUsers()</div><svg style="position:absolute;left:970px;top:26px" width="40" height="32" viewBox="0 0 40 32"><g fill="none" stroke="#EE9D28" stroke-width="1.7"><rect x="7.70" y="8.60" width="8.1" height="3.7" rx="0.7" transform="rotate(-45 11.75 10.45)"/><rect x="22.50" y="13.60" width="4.1" height="2.4" rx="0.7" transform="rotate(-45 24.55 14.8)"/><rect x="21.90" y="21.40" width="4.0" height="2.2" rx="0.7" transform="rotate(-45 23.9 22.5)"/><path d="M13.3 13.9 V22.6 H21.6"/><path d="M13.3 14.7 H22.2"/></g></svg><svg style="position:absolute;left:1120px;top:26px" width="40" height="32" viewBox="0 0 40 32"><g fill="none" stroke="#B180D7" stroke-width="2" stroke-linejoin="round"><path d="M18.9 5.9 L27.5 10.6 V21.1 L18.9 25.6 L10.3 21.1 V10.6 Z"/><path d="M10.3 10.6 L18.9 15 L27.5 10.6"/><path d="M18.9 15 V25.6"/></g></svg>
<div id="bcsh"></div>
<div style="position:absolute;left:0;top:1417px;width:1628px;height:1px;background:#2b2b2b"></div><div style="position:absolute;left:0;top:1418px;width:1628px;height:3px;background:#1f1f1f"></div>
</body></html>
